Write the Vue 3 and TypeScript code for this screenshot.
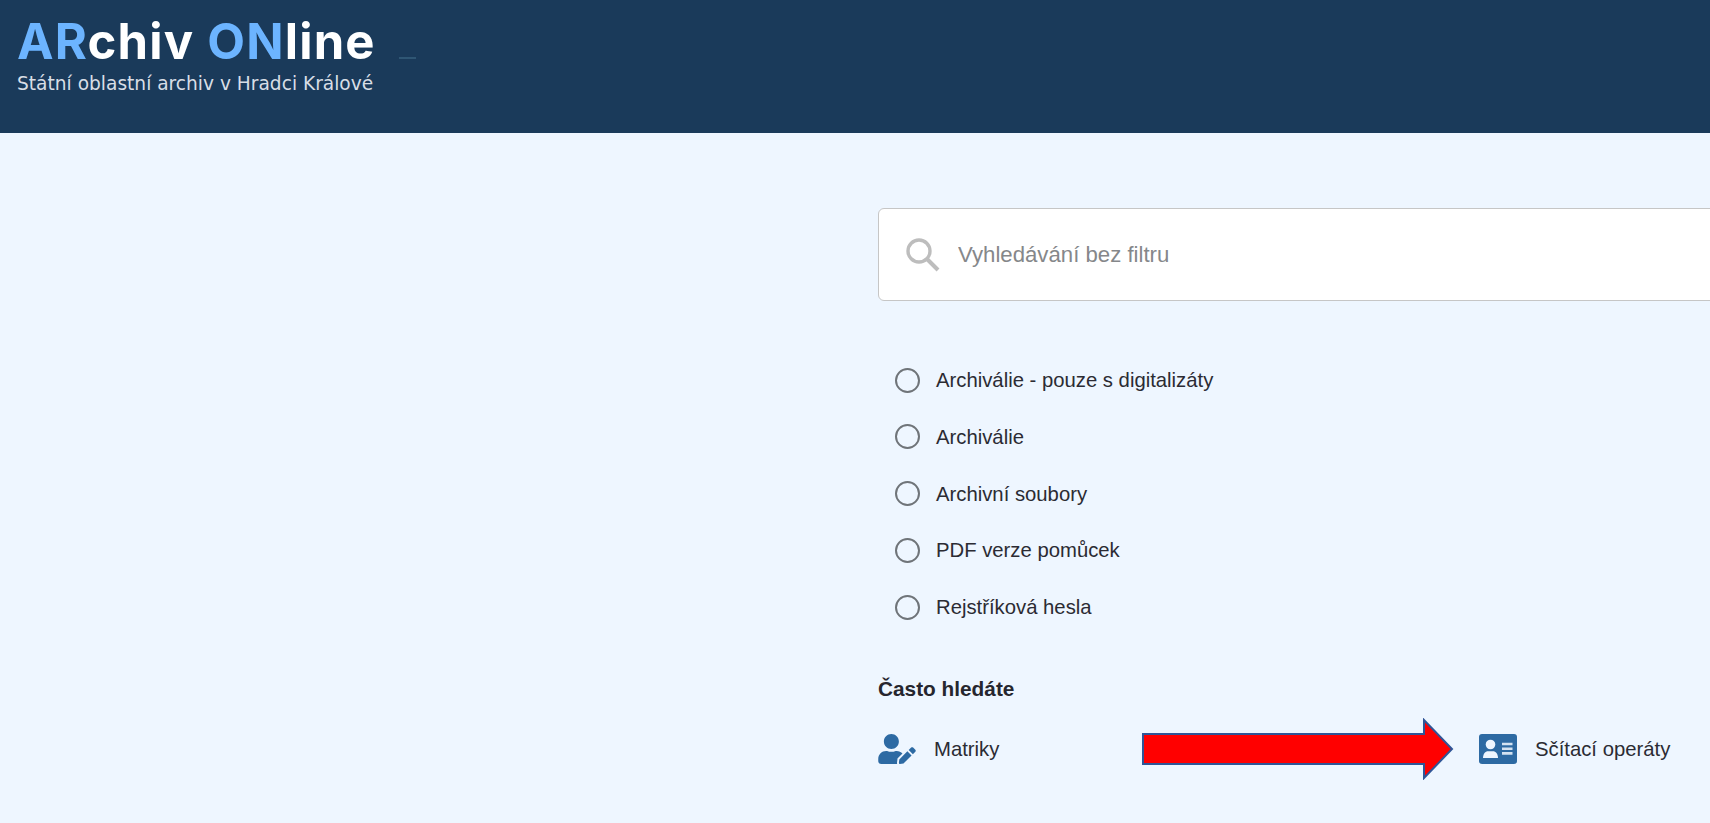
<script setup lang="ts">
const filters: string[] = [
  'Archiválie - pouze s digitalizáty',
  'Archiválie',
  'Archivní soubory',
  'PDF verze pomůcek',
  'Rejstříková hesla',
]
</script>

<template>
  <div class="page">
    <header class="top">
      <div class="brand">
        <div class="logo"><b>AR</b>chiv <b>ON</b>line</div>
        <div class="sub">Státní oblastní archiv v Hradci Králové</div>
      </div>
      <span class="dash"></span>
    </header>

    <main class="content">
      <div class="search">
        <svg class="search-icon" viewBox="0 0 36 36" width="36" height="36">
          <circle cx="14" cy="14" r="11" fill="none" stroke="#bdbdbd" stroke-width="3.4" />
          <path d="M22 22 L33 33" stroke="#bdbdbd" stroke-width="4" />
        </svg>
        <input class="search-input" type="text" placeholder="Vyhledávání bez filtru" />
      </div>

      <ul class="filters">
        <li v-for="f in filters" :key="f" class="filter">
          <span class="radio"></span>
          <span>{{ f }}</span>
        </li>
      </ul>

      <h2 class="often">Často hledáte</h2>

      <div class="links">
        <a class="link">
          <svg class="icon-user" viewBox="0 0 640 512" width="38" height="30">
            <path fill="#2d6aa3" d="M224 256c70.7 0 128-57.3 128-128S294.7 0 224 0 96 57.3 96 128s57.3 128 128 128zm89.6 32h-16.7c-22.2 10.2-46.9 16-72.9 16s-50.6-5.8-72.9-16h-16.7C60.2 288 0 348.2 0 422.4V464c0 26.5 21.5 48 48 48h274.9c-2.4-6.8-3.4-14-2.6-21.3l6.8-60.9 1.2-11.1 7.9-7.9 77.3-77.3c-24.5-27.7-60-45.5-99.9-45.5zm45.3 145.3l-6.8 61c-1.1 10.2 7.5 18.8 17.6 17.6l60.9-6.8 137.9-137.9-71.7-71.7-137.9 137.8zM633 268.9L595.1 231c-9.3-9.3-24.5-9.3-33.8 0l-37.8 37.8-4.1 4.1 71.8 71.7 41.8-41.8c9.3-9.4 9.3-24.5 0-33.9z" />
          </svg>
          <span>Matriky</span>
        </a>
        <a class="link">
          <svg class="icon-card" viewBox="0 0 38 30" width="38" height="30">
            <rect x="0" y="0" width="38" height="30" rx="3" fill="#2d6aa3" />
            <circle cx="11.5" cy="10.5" r="4.8" fill="#eef6ff" />
            <path d="M4 24c0-4.4 2.4-6.8 5-6.8h5c2.6 0 5 2.4 5 6.8z" fill="#eef6ff" />
            <path d="M23 10h10.5M23 14.7h10.5M23 19.4h10.5" stroke="#d3e2f1" stroke-width="2.6" />
          </svg>
          <span>Sčítací operáty</span>
        </a>

        <svg class="arrow" viewBox="0 0 314 62" width="314" height="62">
          <path d="M1 16 H282 V2 L310 31 L282 60 V46 H1 Z" fill="#ff0000" stroke="#2f5597" stroke-width="2" />
        </svg>
      </div>
    </main>
  </div>
</template>

<style scoped>
.page {
  width: 100%;
  height: 823px;
  overflow: hidden;
  background: #eef6ff;
  font-family: "Liberation Sans", Arial, sans-serif;
  color: #2b2b33;
}

.top {
  height: 133px;
  background: #1a3a5a;
  display: flex;
  align-items: flex-start;
  padding: 13px 0 0 17px;
  box-sizing: border-box;
}

.logo {
  font-family: Inter, "Liberation Sans", sans-serif;
  font-size: 49px;
  font-weight: 700;
  letter-spacing: 1.2px;
  line-height: 58px;
  color: #fff;
  white-space: nowrap;
}

.logo b {
  font-weight: 700;
  color: #6cb4ff;
}

.sub {
  font-family: "DejaVu Sans", sans-serif;
  font-size: 18.6px;
  line-height: 20px;
  color: #d8dee6;
  margin-top: 3px;
  white-space: nowrap;
}

.dash {
  width: 17px;
  height: 2px;
  background: #2f5674;
  margin: 44px 0 0 23px;
}

.content {
  padding: 75px 0 0 878px;
}

.search {
  width: 900px;
  height: 93px;
  box-sizing: border-box;
  background: #fff;
  border: 1px solid #c6c6c6;
  border-radius: 6px;
  display: flex;
  align-items: center;
  padding-left: 26px;
  gap: 17px;
}

.search-icon {
  flex: none;
}

.search-input {
  flex: 1;
  border: 0;
  outline: 0;
  background: transparent;
  font: 22.2px "Liberation Sans", Arial, sans-serif;
  padding: 0;
}

.search-input::placeholder {
  color: #85878a;
  opacity: 1;
}

.filters {
  list-style: none;
  margin: 64px 0 0;
  padding: 0 0 0 17px;
  display: flex;
  flex-direction: column;
  gap: 26.8px;
}

.filter {
  display: flex;
  align-items: center;
  gap: 16px;
  font-size: 20.3px;
  line-height: 30px;
}

.radio {
  width: 25px;
  height: 25px;
  box-sizing: border-box;
  border: 2.4px solid #6f7479;
  border-radius: 50%;
}

.often {
  margin: 54px 0 0;
  font-size: 20.8px;
  line-height: 26px;
  font-weight: 700;
  color: #26262e;
}

.links {
  position: relative;
  margin-top: 32px;
  display: flex;
}

.link {
  flex: none;
  display: flex;
  align-items: center;
  gap: 18px;
  font-size: 20.3px;
  line-height: 30px;
  width: 601px;
}

.arrow {
  position: absolute;
  left: 264px;
  top: -16px;
}
</style>

<style>
body {
  margin: 0;
  overflow: hidden;
}
</style>
